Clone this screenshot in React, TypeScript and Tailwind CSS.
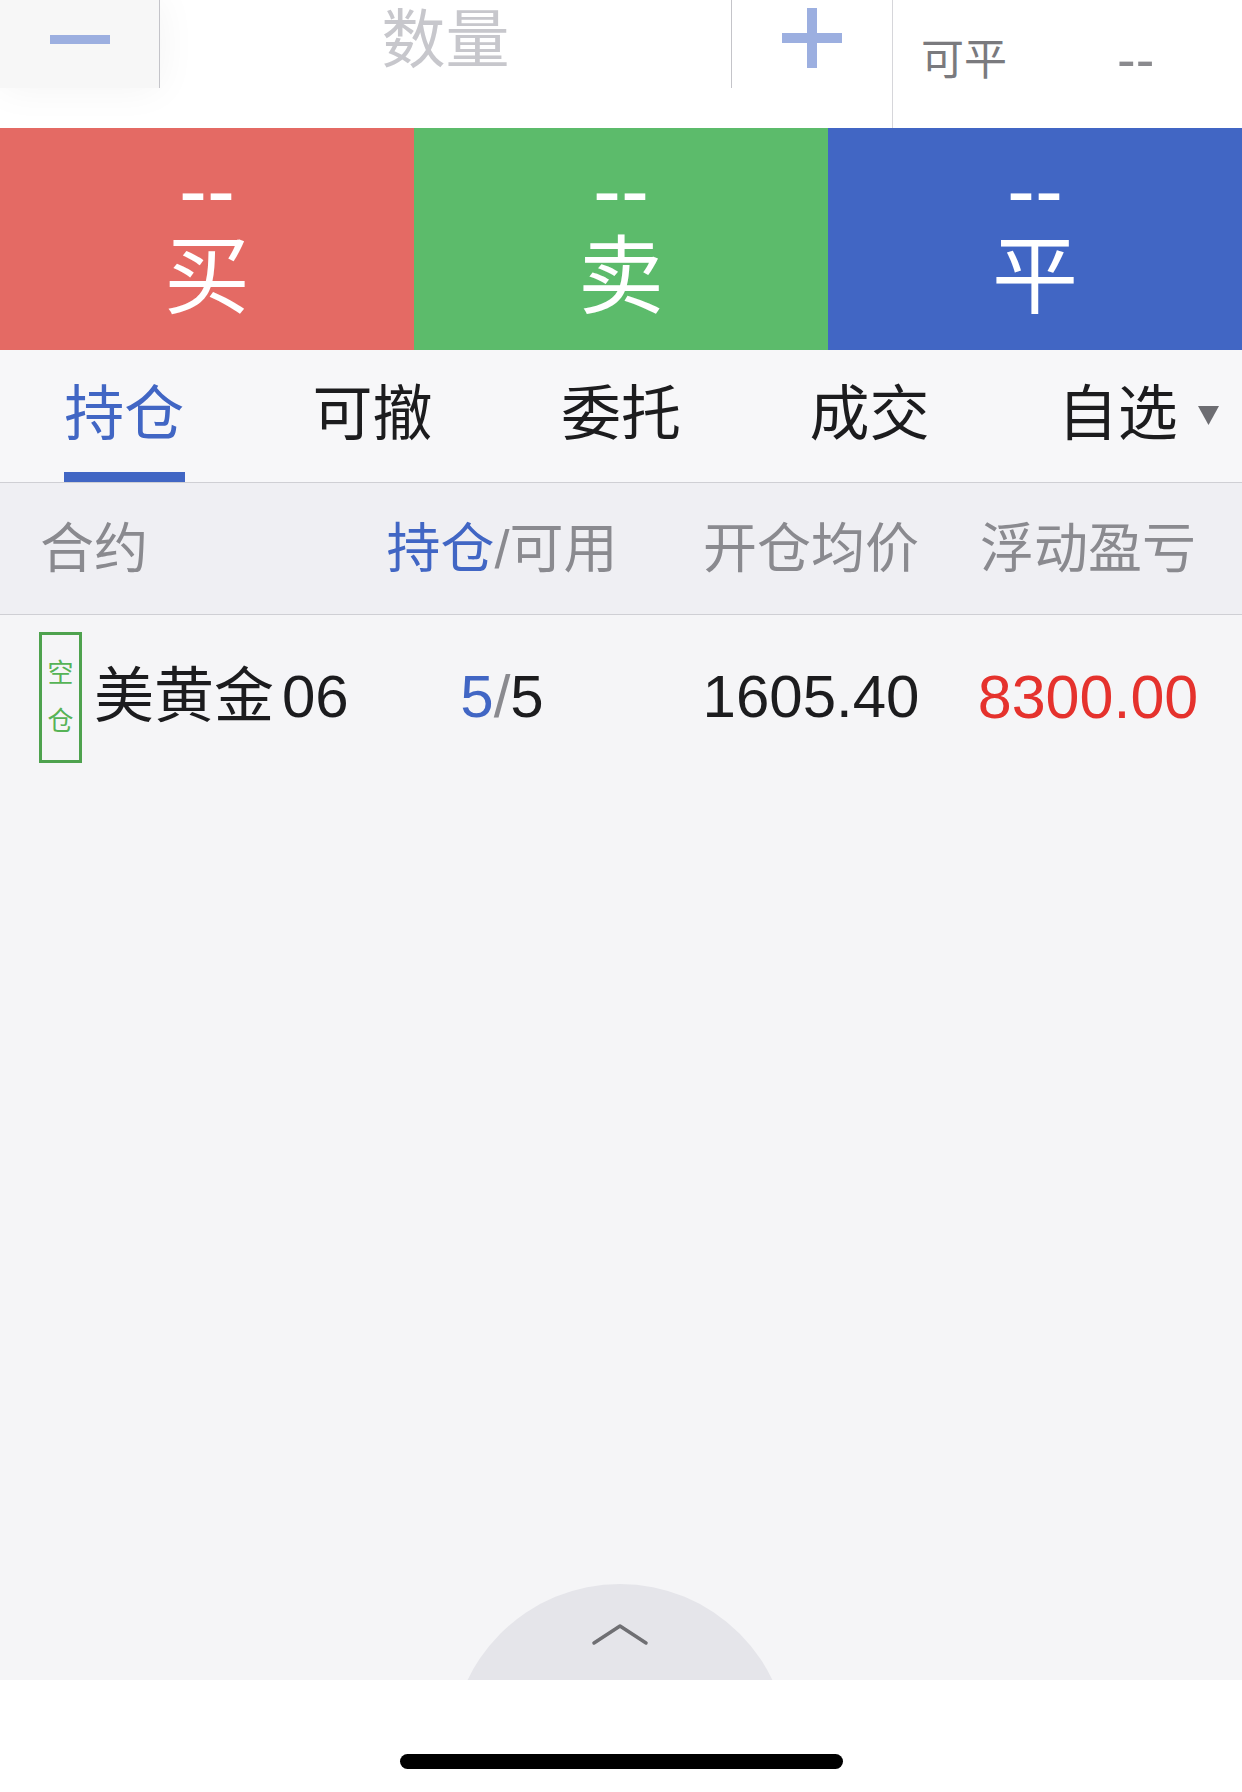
import React from "react";

const FONT = "font-['Liberation_Sans','Noto_Sans_CJK_SC',sans-serif]";

const tabs = ["持仓", "可撤", "委托", "成交", "自选"];

function TradeButton({ label, color }: { label: string; color: string }) {
  return (
    <div className={`flex w-[414px] flex-col items-center pt-[20px] text-white ${color}`}>
      <div className="text-[84px] leading-[84px]">--</div>
      <div className="mt-[2px] text-[86px] leading-[86px]">{label}</div>
    </div>
  );
}

export default function App() {
  return (
    <div className={`flex h-[1792px] w-[1242px] flex-col bg-white ${FONT}`}>
      {/* quantity bar */}
      <div className="flex h-[128px] shrink-0 bg-white">
        <div className="flex h-[88px] w-[160px] justify-center border-r border-[#c4c4c9] bg-[#f7f7f7] pt-[35px] shadow-[0_0_40px_rgba(0,0,0,0.05)]">
          <div className="h-[9px] w-[60px] bg-[#9cafe0]" />
        </div>
        <div className="flex h-[88px] w-[572px] items-center justify-center border-r border-[#c4c4c9] pb-[8px] text-[64px] leading-none text-[#c7c7cc]">
          数量
        </div>
        <div className="flex h-[88px] w-[160px] justify-center pt-[8px]">
          <svg width="60" height="60" viewBox="0 0 60 60">
            <rect x="25" y="0" width="10" height="60" fill="#9cafe0" />
            <rect x="0" y="25" width="60" height="10" fill="#9cafe0" />
          </svg>
        </div>
        <div className="flex flex-1 items-center border-l border-[#d6d6da] pl-[28px] pb-[8px]">
          <span className="text-[43px] leading-none text-[#7a7a7e]">可平</span>
          <span className="ml-[110px] text-[56px] leading-none text-[#8a8a8e]">--</span>
        </div>
      </div>

      {/* buy / sell / close */}
      <div className="flex h-[222px] shrink-0">
        <TradeButton label="买" color="bg-[#e46a64]" />
        <TradeButton label="卖" color="bg-[#5cbb6b]" />
        <TradeButton label="平" color="bg-[#4166c4]" />
      </div>

      {/* tabs */}
      <div className="grid h-[133px] shrink-0 grid-cols-5 border-b border-[#cfcfd4] bg-[#f7f7f9]">
        {tabs.map((t, i) => (
          <div key={t} className="relative flex justify-center pt-[35px]">
            <span
              className={`text-[60px] leading-[60px] ${i === 0 ? "text-[#4166c4]" : "text-[#1c1c1e]"}`}
            >
              {t}
            </span>
            {i === 4 && (
              <svg
                className="absolute right-[23px] top-[56px]"
                width="21"
                height="19"
                viewBox="0 0 21 19"
              >
                <path d="M0 0 L21 0 L10.5 19 Z" fill="#6d6d72" />
              </svg>
            )}
            {i === 0 && (
              <div className="absolute bottom-0 left-[64px] h-[10px] w-[121px] bg-[#4166c4]" />
            )}
          </div>
        ))}
      </div>

      {/* header */}
      <div className="flex h-[132px] shrink-0 items-center border-b border-[#cfcfd4] bg-[#efeff3] text-[54px] leading-none text-[#8a8a8f]">
        <div className="w-[382px] pl-[40px]">合约</div>
        <div className="flex w-[240px] justify-center whitespace-nowrap">
          <span className="text-[#4166c4]">持仓</span>/可用
        </div>
        <div className="flex w-[378px] justify-center whitespace-nowrap">开仓均价</div>
        <div className="flex w-[176px] justify-center whitespace-nowrap">浮动盈亏</div>
      </div>

      {/* content */}
      <div className="relative flex-1 overflow-hidden bg-[#f5f5f7]">
        <div className="flex h-[164px] items-center text-[60px] leading-none text-[#1c1c1e]">
          <div className="flex w-[382px] items-center pl-[39px]">
            <div className="flex h-[131px] w-[43px] flex-col items-center justify-center gap-[22px] border-[3px] border-[#4ea24e] text-[26px] leading-none text-[#56b356]">
              <span>空</span>
              <span>仓</span>
            </div>
            <span className="ml-[12px] whitespace-nowrap">
              美黄金<span className="ml-[8px]">06</span>
            </span>
          </div>
          <div className="flex w-[240px] justify-center whitespace-nowrap">
            <span className="text-[#4166c4]">5</span>
            <span className="text-[#8a8a8f]">/</span>
            <span>5</span>
          </div>
          <div className="flex w-[378px] justify-center whitespace-nowrap">1605.40</div>
          <div className="flex w-[176px] justify-center whitespace-nowrap text-[61px] text-[#e5322d]">
            8300.00
          </div>
        </div>

        {/* expand handle */}
        <div className="absolute left-[451px] top-[969px] flex h-[338px] w-[338px] justify-center rounded-full bg-[#e5e5ea] pt-[38px]">
          <svg width="58" height="24" viewBox="0 0 58 24">
            <path
              d="M3 21 L29 4 L55 21"
              fill="none"
              stroke="#6f6f73"
              strokeWidth="3.5"
              strokeLinecap="round"
              strokeLinejoin="round"
            />
          </svg>
        </div>
      </div>

      {/* home indicator */}
      <div className="flex h-[112px] shrink-0 justify-center bg-white pt-[74px]">
        <div className="h-[15px] w-[443px] rounded-full bg-black" />
      </div>
    </div>
  );
}
